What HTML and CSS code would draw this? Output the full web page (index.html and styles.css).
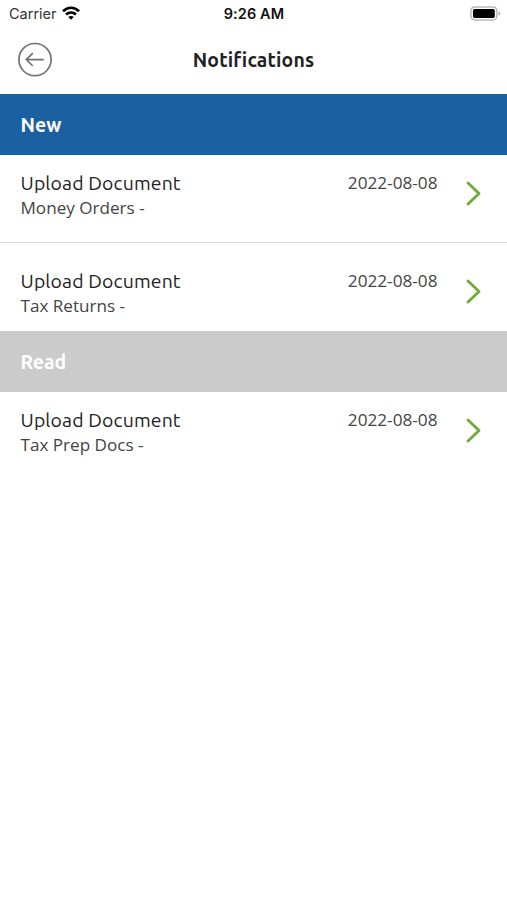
FILE: index.html
```html
<!DOCTYPE html>
<html lang="en">
<head>
<meta charset="utf-8">
<title>Notifications</title>
<link rel="stylesheet" href="styles.css">
</head>
<body>
<div class="status">
  <div class="carrier"><span class="carrier-name">Carrier</span>
    <svg class="wifi" width="18" height="14" viewBox="0 0 18 14" fill="none" stroke="#000" stroke-width="2.7"><path d="M1 5.200C5.700.6 12.300.6 17 5.200M4 8.500c3-2.700 7-2.700 10 0"/><path d="M9 13.700 6.200 11c1.600-1.500 4-1.500 5.600 0z" fill="#000" stroke="none"/></svg>
  </div>
  <div class="clock">9:26 AM</div>
  <svg class="battery" width="31" height="15" viewBox="0 0 31 15"><rect x=".9" y=".9" width="26" height="13" rx="3.8" fill="#fff" stroke="#b9b9b9" stroke-width="1.5"/><rect x="3" y="3" width="21.8" height="8.9" rx="1.6" fill="#000"/><path d="M28.600 5.300c2.300 1 2.300 3.400 0 4.400z" fill="#b0b0b0"/></svg>
</div>
<header class="header">
  <svg class="back" width="36" height="36" viewBox="0 0 36 36" fill="none" stroke="#727272" stroke-width="1.7"><circle cx="18" cy="17.6" r="16.1"/><path d="M26.800 17.600H9.500M15.800 11.200 9.300 17.600l6.500 6.400"/></svg>
  <h1 class="heading">Notifications</h1>
</header>
<main>
  <h2 class="section section-new">New</h2>
  <div class="row">
    <div class="info"><div class="title">Upload Document</div><div class="detail">Money Orders -</div></div>
    <time class="date">2022-08-08</time>
    <svg class="chevron" width="18" height="26" viewBox="0 0 18 26"><path d="M3 3l11 10.500L3 24"/></svg>
  </div>
  <div class="row row-divided">
    <div class="info"><div class="title">Upload Document</div><div class="detail">Tax Returns -</div></div>
    <time class="date">2022-08-08</time>
    <svg class="chevron" width="18" height="26" viewBox="0 0 18 26"><path d="M3 3l11 10.500L3 24"/></svg>
  </div>
  <h2 class="section section-read">Read</h2>
  <div class="row">
    <div class="info"><div class="title">Upload Document</div><div class="detail">Tax Prep Docs -</div></div>
    <time class="date">2022-08-08</time>
    <svg class="chevron" width="18" height="26" viewBox="0 0 18 26"><path d="M3 3l11 10.500L3 24"/></svg>
  </div>
</main>
</body>
</html>
```
FILE: styles.css
```css
* { box-sizing: border-box; }
body {
  margin: 0;
  min-height: 900px;
  background: #fff;
  color: #222;
  font-family: Ubuntu, "Open Sans", sans-serif;
}
svg { display: block; }
.status {
  display: grid;
  grid-template-columns: 1fr auto 1fr;
  align-items: center;
  height: 28px;
  padding: 0 7px 0 9px;
  color: #111;
  font: 15px/28px Inter, sans-serif;
}
.carrier { display: flex; align-items: center; gap: 5px; }
.carrier-name { font-size: 14.5px; color: #333; }
.wifi { margin-top: -2px; }
.clock { margin-left: -1px; font-size: 14.5px; font-weight: 600; letter-spacing: .1px; }
.battery { justify-self: end; margin: -1px -1px 0 0; }
.header {
  display: grid;
  grid-template-columns: 36px 1fr 36px;
  align-items: center;
  height: 66px;
  padding: 0 17px;
}
.back { margin-top: -2px; }
.heading {
  margin: -2px 0 0;
  text-align: center;
  font-size: 19.4px;
  line-height: 26px;
  font-weight: 700;
  letter-spacing: .19px;
}
.section {
  height: 61px;
  margin: 0;
  padding-left: 20.5px;
  color: #fff;
  font-size: 19.4px;
  line-height: 62px;
  font-weight: 600;
}
.section-new { background: #1b60a1; }
.section-read { background: #cbcbcb; }
.row {
  display: flex;
  align-items: flex-start;
  height: 87px;
  padding: 15px 24.5px 0 20.5px;
}
.row-divided { height: 89px; padding-top: 25px; border-top: 1px solid #d6d6d6; }
.info { flex: 1; }
.title { font-size: 19.4px; line-height: 26px; letter-spacing: .14px; }
.detail { color: #444; font: 17.1px/23px "Open Sans", sans-serif; }
.date { color: #444; font: 17.2px/26px "Open Sans", sans-serif; }
.chevron {
  margin: 10px 0 0 27px;
  fill: none;
  stroke: #70ab36;
  stroke-width: 2.8;
  stroke-linecap: round;
  stroke-linejoin: round;
}
```
